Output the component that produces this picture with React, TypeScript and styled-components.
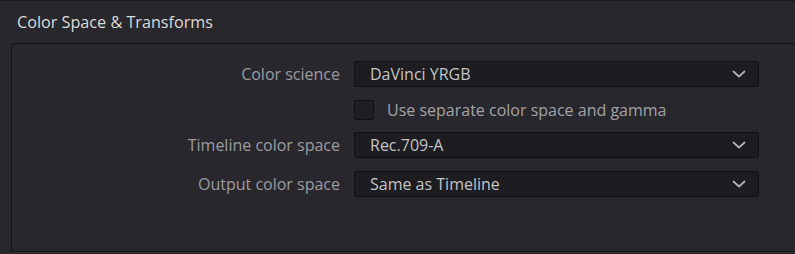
import React from "react";
import styled, { createGlobalStyle } from "styled-components";

const Global = createGlobalStyle`
  html, body { margin: 0; padding: 0; background: #28272c; }
  body { font-family: "Open Sans", "Noto Sans", sans-serif; }
`;

const Frame = styled.div`
  width: 795px;
  height: 254px;
  box-sizing: border-box;
  border-top: 1px solid #1a191d;
  background: #28272c;
  overflow: hidden;
  display: flex;
  flex-direction: column;
`;

const Header = styled.div`
  height: 42px;
  box-sizing: border-box;
  padding: 10px 0 0 17px;
  color: #dcdcdc;
  font-size: 16.2px;
  line-height: 22px;
  flex: none;
`;

const Panel = styled.div`
  margin-left: 11px;
  height: 209px;
  box-sizing: border-box;
  border: 1px solid #121114;
  border-right: none;
  border-radius: 2px 0 0 2px;
  background: #28272d;
  padding: 17px 0 0 0;
  display: grid;
  grid-template-columns: 328px 405px;
  column-gap: 14px;
  align-content: start;
  box-shadow: 0 1px 0 #34333a;
`;

const Label = styled.div<{ $top?: number }>`
  color: #9c9ba0;
  font-size: 16px;
  line-height: 26px;
  text-align: right;
  margin-top: ${(p) => p.$top ?? 0}px;
`;

const Select = styled.div<{ $top?: number }>`
  height: 26px;
  box-sizing: border-box;
  margin-top: ${(p) => p.$top ?? 0}px;
  border: 1px solid #101012;
  border-radius: 2px;
  background: #1d1c20;
  display: flex;
  align-items: center;
  justify-content: space-between;
  padding: 0 12px 0 15px;
  color: #c4c4c6;
  font-size: 16px;
`;

const CheckRow = styled.label`
  grid-column: 2;
  margin-top: 13px;
  display: flex;
  align-items: center;
  gap: 13px;
  color: #a3a2a7;
  font-size: 16px;
  height: 20px;
`;

const Box = styled.span`
  width: 20px;
  height: 20px;
  box-sizing: border-box;
  border: 1px solid #111013;
  border-radius: 2px;
  background: #1f1e22;
  flex: none;
`;

const Chevron = () => (
  <svg width="14" height="8" viewBox="0 0 14 8" fill="none">
    <path d="M1.5 1.5 L7 6.5 L12.5 1.5" stroke="#b4b4b8" strokeWidth="1.7" strokeLinecap="round" strokeLinejoin="round" />
  </svg>
);

export default function App() {
  return (
    <Frame>
      <Global />
      <Header>Color Space &amp; Transforms</Header>
      <Panel>
        <Label>Color science</Label>
        <Select>
          <span>DaVinci YRGB</span>
          <Chevron />
        </Select>
        <CheckRow>
          <Box />
          <span>Use separate color space and gamma</span>
        </CheckRow>
        <Label $top={12}>Timeline color space</Label>
        <Select $top={12}>
          <span>Rec.709-A</span>
          <Chevron />
        </Select>
        <Label $top={13}>Output color space</Label>
        <Select $top={13}>
          <span>Same as Timeline</span>
          <Chevron />
        </Select>
      </Panel>
    </Frame>
  );
}
